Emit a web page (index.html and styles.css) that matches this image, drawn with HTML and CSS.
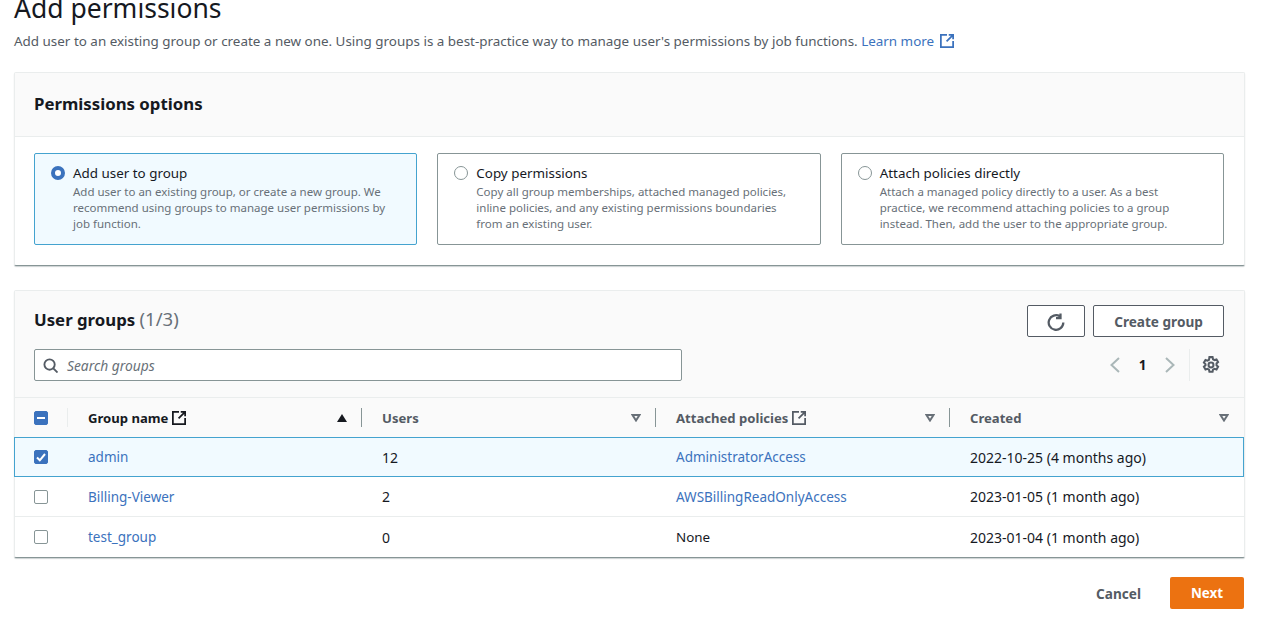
FILE: index.html
```html
<!DOCTYPE html>
<html lang="en">
<head>
  <meta charset="UTF-8">
  <title>Add permissions</title>
  <link rel="stylesheet" href="styles.css">
</head>
<body>

<h1>Add permissions</h1>
<p class="intro">Add user to an existing group or create a new one. Using groups is a best-practice way to manage user's permissions by job functions. <a href="#" class="learn">Learn more <svg class="ext" viewBox="0 0 16 16"><path d="M8 1H1v14h14V8M10 1h5v5M15 1L7.500 8.500"/></svg></a></p>

<section class="card options-card">
  <header class="card-head"><h2>Permissions options</h2></header>
  <div class="options">
    <label class="option selected">
      <span class="radio"></span>
      <span class="option-text">
        <span class="option-title">Add user to group</span>
        <span class="option-desc">Add user to an existing group, or create a new group. We recommend using groups to manage user permissions by job function.</span>
      </span>
    </label>
    <label class="option">
      <span class="radio"></span>
      <span class="option-text">
        <span class="option-title">Copy permissions</span>
        <span class="option-desc">Copy all group memberships, attached managed policies, inline policies, and any existing permissions boundaries from an existing user.</span>
      </span>
    </label>
    <label class="option">
      <span class="radio"></span>
      <span class="option-text">
        <span class="option-title">Attach policies directly</span>
        <span class="option-desc">Attach a managed policy directly to a user. As a best practice, we recommend attaching policies to a group instead. Then, add the user to the appropriate group.</span>
      </span>
    </label>
  </div>
</section>

<section class="card groups-card">
  <div class="groups-head">
    <div class="title-row">
      <h2>User groups <span class="count">(1/3)</span></h2>
      <div class="actions">
        <button class="btn btn-icon"><svg viewBox="0 0 16 16"><path d="M14.500 8.500A6.500 6.500 0 1 1 11.500 3M12 0.500V4.500H8"/></svg></button>
        <button class="btn btn-create">Create group</button>
      </div>
    </div>
    <div class="tools-row">
      <div class="search">
        <svg viewBox="0 0 16 16"><circle cx="7" cy="7" r="5.500"/><path d="M11 11L15.500 15.500"/></svg>
        <span>Search groups</span>
      </div>
      <div class="pager">
        <svg class="chev" viewBox="0 0 16 16"><path d="M12 1L4.500 8l7.500 7"/></svg>
        <span class="page-num">1</span>
        <svg class="chev" viewBox="0 0 16 16"><path d="M4 1l7.500 7L4 15"/></svg>
        <span class="pager-sep"></span>
        <svg class="gear" viewBox="0 0 16 16"><path d="M6.600 1h2.800l.4 1.900 1.300.7 1.800-.6 1.400 2.400-1.400 1.300v1.600l1.400 1.300-1.400 2.400-1.800-.6-1.300.7-.4 1.900H6.600l-.4-1.900-1.300-.7-1.800.6-1.400-2.400 1.400-1.300V7.200L1.700 5.900l1.400-2.400 1.800.6 1.300-.7z"/><circle cx="8" cy="8" r="2.200"/></svg>
      </div>
    </div>
  </div>

  <div class="row row-head">
    <div class="cell cell-check"><span class="check-wrap"><span class="check on"><svg viewBox="0 0 14 14"><path d="M3 7h8"/></svg></span></span></div>
    <div class="cell"><div class="th strong"><span class="th-label">Group name <svg class="ext" viewBox="0 0 16 16"><path d="M8 1H1v14h14V8M10 1h5v5M15 1L7.500 8.500"/></svg></span><svg class="sort-up" viewBox="0 0 10 8"><path d="M5 0l5 8H0z"/></svg></div></div>
    <div class="cell"><div class="th"><span class="th-label">Users</span><svg class="sort" viewBox="0 0 10 8"><path d="M1.500 1h7L5 6.500z"/></svg></div></div>
    <div class="cell"><div class="th"><span class="th-label">Attached policies <svg class="ext" viewBox="0 0 16 16"><path d="M8 1H1v14h14V8M10 1h5v5M15 1L7.500 8.500"/></svg></span><svg class="sort" viewBox="0 0 10 8"><path d="M1.500 1h7L5 6.500z"/></svg></div></div>
    <div class="cell"><div class="th last"><span class="th-label">Created</span><svg class="sort" viewBox="0 0 10 8"><path d="M1.500 1h7L5 6.500z"/></svg></div></div>
  </div>

  <div class="row row-body selected">
    <div class="cell cell-check"><span class="check on"><svg viewBox="0 0 14 14"><path d="M3 7.500l2.800 2.800L11 4"/></svg></span></div>
    <div class="cell"><a href="#">admin</a></div>
    <div class="cell cell-wide">12</div>
    <div class="cell"><a href="#">AdministratorAccess</a></div>
    <div class="cell cell-wide">2022-10-25 (4 months ago)</div>
  </div>
  <div class="row row-body">
    <div class="cell cell-check"><span class="check"></span></div>
    <div class="cell"><a href="#">Billing-Viewer</a></div>
    <div class="cell cell-wide">2</div>
    <div class="cell"><a href="#">AWSBillingReadOnlyAccess</a></div>
    <div class="cell cell-wide">2023-01-05 (1 month ago)</div>
  </div>
  <div class="row row-body">
    <div class="cell cell-check"><span class="check"></span></div>
    <div class="cell"><a href="#">test_group</a></div>
    <div class="cell cell-wide">0</div>
    <div class="cell">None</div>
    <div class="cell cell-wide">2023-01-04 (1 month ago)</div>
  </div>
</section>

<footer class="page-actions">
  <a href="#" class="cancel">Cancel</a>
  <button class="btn-next">Next</button>
</footer>

</body>
</html>
```

FILE: styles.css
```css
*, *:after, *:before {
  box-sizing: border-box;
}
html, body {
  height: 626px;
  overflow: hidden;
}
body {
  background: #FFF;
  color: #16191F;
  font-family: "Noto Sans", sans-serif;
  font-size: 13.400px;
  margin: 0;
  padding: 0 21px 0 14px;
}
a {
  color: #3B72BD;
  text-decoration: none;
}
svg {
  fill: none;
  stroke: currentColor;
  stroke-width: 2;
}
h1 {
  font-size: 26.500px;
  font-weight: 400;
  line-height: 30px;
  margin: -7px 0 0;
}
h2 {
  font-size: 16.800px;
  font-weight: 700;
  line-height: 22px;
  margin: 0;
}
.intro {
  color: #545B64;
  font-size: 13.430px;
  line-height: 18px;
  margin: 9px 0 0;
}
.ext {
  display: inline-block;
  height: 14px;
  vertical-align: -2px;
  width: 14px;
}
.learn .ext {
  margin-left: 2px;
}

/* cards */
.card {
  background: #FFF;
  border: 1px solid #EAEDED;
  border-bottom-color: #879596;
  border-radius: 2px;
  box-shadow: 0 1px 1px rgba(0, 28, 36, .2);
}
.options-card {
  height: 194px;
  margin-top: 22px;
}
.card-head {
  align-items: center;
  background: #FAFAFA;
  border-bottom: 1px solid #EAEDED;
  display: flex;
  height: 64px;
  padding: 0 19px 2px;
}
.options {
  display: grid;
  gap: 20px;
  grid-template-columns: repeat(3, 1fr);
  padding: 16px 20px 0 19px;
}
.option {
  border: 1px solid #879596;
  border-radius: 2px;
  display: flex;
  gap: 8px;
  height: 92px;
  padding: 10px 19px 10px 16px;
}
.option.selected {
  background: #F1FAFF;
  border-color: #44A3CF;
}
.radio {
  background: #FFF;
  border: 1px solid #879596;
  border-radius: 50%;
  flex: none;
  height: 14px;
  margin-top: 2px;
  width: 14px;
}
.selected .radio {
  border: 4px solid #3B72BD;
}
.option-text {
  display: block;
}
.option-title {
  display: block;
  line-height: 18px;
}
.option-desc {
  color: #687078;
  display: block;
  font-size: 11.500px;
  line-height: 16px;
  margin-top: 2px;
}

/* user groups */
.groups-card {
  height: 268px;
  margin-top: 24px;
}
.groups-head {
  background: #FAFAFA;
  border-bottom: 1px solid #EAEDED;
  height: 107px;
  padding: 14px 20px 0 19px;
}
.title-row {
  align-items: center;
  display: flex;
  justify-content: space-between;
}
.title-row h2 {
  padding-bottom: 4px;
}
.count {
  color: #687078;
  font-size: 18.500px;
  font-weight: 400;
}
.actions {
  display: flex;
  gap: 8px;
}
.btn {
  background: #FFF;
  border: 1px solid #545B64;
  border-radius: 2px;
  color: #545B64;
  font-family: inherit;
  font-size: 13.600px;
  font-weight: 700;
  height: 32px;
  padding: 0;
}
.btn-icon {
  width: 58px;
}
.btn-icon svg {
  height: 18px;
  vertical-align: middle;
  width: 18px;
}
.btn-create {
  width: 131px;
}
.tools-row {
  align-items: center;
  display: flex;
  justify-content: space-between;
  margin-top: 12px;
}
.search {
  align-items: center;
  background: #FFF;
  border: 1px solid #879596;
  border-radius: 2px;
  color: #687078;
  display: flex;
  font-size: 13.800px;
  font-style: italic;
  gap: 9px;
  height: 32px;
  padding: 0 8px;
  width: 648px;
}
.search svg {
  color: #545B64;
  height: 15px;
  width: 15px;
}
.pager {
  align-items: center;
  display: flex;
  margin-right: 4px;
}
.chev {
  color: #AAB7B8;
  height: 16px;
  width: 16px;
}
.page-num {
  font-weight: 700;
  text-align: center;
  width: 39px;
}
.pager-sep {
  background: #EAEDED;
  height: 32px;
  margin: 0 12px 0 11px;
  width: 1px;
}
.gear {
  color: #545B64;
  height: 18px;
  stroke-width: 1.800;
  width: 18px;
}

/* table */
.row {
  display: grid;
  grid-template-columns: 53px 294px 294px 294px 1fr;
}
.row-head {
  background: #FAFAFA;
  border-bottom: 1px solid #EAEDED;
  color: #545B64;
  font-size: 13.100px;
  font-weight: 700;
  height: 40px;
}
.row-body {
  border-bottom: 1px solid #EAEDED;
  height: 40px;
}
.row-body:last-child {
  border-bottom: 0;
}
.row-body.selected {
  background: #F1FAFF;
  border: 1px solid #44A3CF;
  margin-left: -1px;
  margin-top: -1px;
}
.row-body a {
  font-size: 13.500px;
}
.cell {
  align-items: center;
  display: flex;
}
.cell-wide {
  font-size: 14px;
}
.row-body .cell {
  padding-left: 20px;
}
.row-body .cell-check {
  padding-left: 19px;
}
.row-head .cell-check {
  padding-left: 19px;
}
.check-wrap {
  align-items: center;
  border-right: 1px solid #EAEDED;
  display: flex;
  height: 19px;
  width: 34px;
}
.check {
  align-items: center;
  background: #FFF;
  border: 1px solid #879596;
  border-radius: 2px;
  color: #FFF;
  display: flex;
  height: 14px;
  justify-content: center;
  width: 14px;
}
.check.on {
  background: #3B72BD;
  border-color: #3B72BD;
}
.check svg {
  flex: none;
  height: 14px;
  stroke-width: 2;
  width: 14px;
}
.th {
  align-items: center;
  border-right: 1px solid #879596;
  display: flex;
  height: 19px;
  justify-content: space-between;
  padding: 0 14px 0 20px;
  width: 100%;
}
.th.last {
  border-right: 0;
  padding-right: 15px;
}
.strong {
  color: #16191F;
}
.th-label {
  white-space: nowrap;
}
.sort-up, .sort {
  height: 8px;
  width: 10px;
}
.sort-up {
  fill: #16191F;
  stroke: none;
}
.sort {
  color: #687078;
}

/* bottom actions */
.page-actions {
  align-items: center;
  display: flex;
  gap: 29px;
  justify-content: flex-end;
  margin-top: 19px;
  padding-right: 1px;
}
.cancel {
  color: #545B64;
  font-size: 13.600px;
  font-weight: 700;
}
.btn-next {
  background: #EC7211;
  border: 0;
  border-radius: 2px;
  color: #FFF;
  font-family: inherit;
  font-size: 13.400px;
  font-weight: 700;
  height: 32px;
  width: 74px;
}
```
